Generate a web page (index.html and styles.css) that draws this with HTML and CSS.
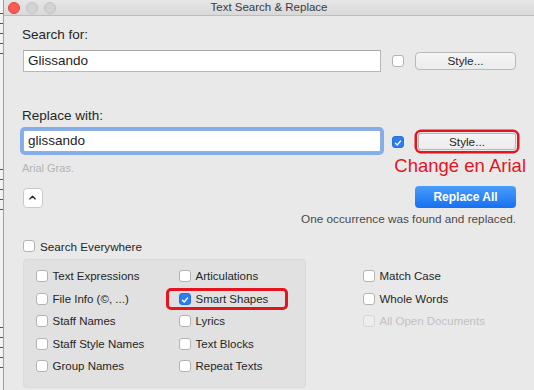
FILE: index.html
```html
<!DOCTYPE html>
<html>
<head>
<meta charset="utf-8">
<link rel="stylesheet" href="styles.css">
</head>
<body>
<div class="screen">
  <div class="edge">
    <div class="staff s1"></div>
    <div class="staff s2"></div>
    <div class="staff s3"></div>
  </div>
  <div class="window">
    <div class="titlebar">
      <div class="lights"><span class="light red"></span><span class="light"></span><span class="light"></span></div>
      <div class="title">Text Search &amp; Replace</div>
      <div></div>
    </div>
    <div class="content">
      <div class="label l1">Search for:</div>
      <div class="row r1">
        <div class="field">Glissando</div>
        <span class="cb"></span>
        <div class="btn">Style...</div>
      </div>
      <div class="label l2">Replace with:</div>
      <div class="row r2">
        <div class="field focus">glissando</div>
        <span class="cb on"><svg viewBox="0 0 12 12" width="12" height="12"><path d="M3 6.3 L5.1 8.4 L9 3.6" fill="none" stroke="#fff" stroke-width="1.6" stroke-linecap="round" stroke-linejoin="round"/></svg></span>
        <div class="btn marked">Style...</div>
      </div>
      <div class="row r3"><span class="hint">Arial Gras.</span><span class="note">Changé en Arial</span></div>
      <div class="row r4">
        <div class="up"><svg viewBox="0 0 20 20" width="18" height="18"><path d="M6.5 11 L9.5 8 L12.5 11" fill="none" stroke="#2a2a2a" stroke-width="1.5" stroke-linecap="round" stroke-linejoin="round"/></svg></div>
        <div class="primary">Replace All</div>
      </div>
      <div class="msg">One occurrence was found and replaced.</div>
      <div class="check se"><span class="cb"></span><span>Search Everywhere</span></div>
      <div class="lower">
        <div class="group">
          <div class="check"><span class="cb"></span><span>Text Expressions</span></div>
          <div class="check"><span class="cb"></span><span>Articulations</span></div>
          <div class="check"><span class="cb"></span><span>File Info (©, ...)</span></div>
          <div class="check marked"><span class="cb on"><svg viewBox="0 0 12 12" width="12" height="12"><path d="M3 6.3 L5.1 8.4 L9 3.6" fill="none" stroke="#fff" stroke-width="1.6" stroke-linecap="round" stroke-linejoin="round"/></svg></span><span>Smart Shapes</span></div>
          <div class="check"><span class="cb"></span><span>Staff Names</span></div>
          <div class="check"><span class="cb"></span><span>Lyrics</span></div>
          <div class="check"><span class="cb"></span><span>Staff Style Names</span></div>
          <div class="check"><span class="cb"></span><span>Text Blocks</span></div>
          <div class="check"><span class="cb"></span><span>Group Names</span></div>
          <div class="check"><span class="cb"></span><span>Repeat Texts</span></div>
        </div>
        <div class="opts">
          <div class="check"><span class="cb"></span><span>Match Case</span></div>
          <div class="check"><span class="cb"></span><span>Whole Words</span></div>
          <div class="check disabled"><span class="cb"></span><span>All Open Documents</span></div>
        </div>
      </div>
    </div>
  </div>
</div>
</body>
</html>
```

FILE: styles.css
```css
html, body {
  margin: 0;
  padding: 0;
}
body {
  width: 534px;
  height: 390px;
  overflow: hidden;
  background: #e9e9e9;
  font-family: "Liberation Sans", Arial, sans-serif;
  color: #232323;
}
.screen {
  display: flex;
  width: 534px;
  height: 390px;
}
.edge {
  width: 3px;
  flex: none;
  background: #f2f2f2;
  border-right: 1px solid #9e9e9e;
  display: flex;
  flex-direction: column;
}
.staff {
  height: 41px;
  background: repeating-linear-gradient(to bottom, #555 0, #555 1px, transparent 1px, transparent 10px);
}
.s1 { margin-top: 13px; }
.s2 { margin-top: 115px; }
.s3 { margin-top: 117px; }

.window {
  flex: 1;
  display: flex;
  flex-direction: column;
  background: #e9e9e9;
}
.titlebar {
  height: 15px;
  border-bottom: 1px solid #bdbdbd;
  background: linear-gradient(#e6e6e6, #d9d9d9);
  display: grid;
  grid-template-columns: 1fr auto 1fr;
  align-items: center;
}
.lights {
  display: flex;
  gap: 6px;
  padding-left: 4px;
}
.light {
  width: 10px;
  height: 10px;
  border-radius: 50%;
  background: #d3d3d3;
  border: 1px solid #c2c2c2;
}
.light.red {
  background: #fc5b55;
  border-color: #e2433d;
}
.title {
  font-size: 11.5px;
  color: #3a3a3a;
  line-height: 15px;
}

.content {
  padding: 0 18px 0 18px;
  display: flex;
  flex-direction: column;
}
.label {
  font-size: 13.5px;
  line-height: 16px;
  color: #262626;
}
.l1 { margin-top: 11px; }
.l2 { margin-top: 36px; }

.row {
  display: flex;
  align-items: center;
}
.r1 { margin-top: 7px; height: 22px; }
.r2 { margin-top: 6px; height: 22px; }

.field {
  width: 358px;
  height: 22px;
  box-sizing: border-box;
  margin-left: 1px;
  background: #fff;
  border: 1px solid #b8b8b8;
  border-top-color: #a9a9a9;
  font-size: 13.5px;
  line-height: 20px;
  padding-left: 4px;
  color: #1e1e1e;
}
.field.focus {
  border-color: #8fb0e3;
  border-radius: 2px;
  box-shadow: 0 0 0 3px #84aeea;
}

.cb {
  width: 12px;
  height: 12px;
  box-sizing: border-box;
  flex: none;
  border: 1px solid #b3b3b3;
  border-radius: 3px;
  background: #fff;
  display: flex;
}
.cb.on {
  background: #2c7cf4;
  border-color: #2570e2;
}
.r1 .cb, .r2 .cb {
  margin-left: 11px;
}
.r2 .cb { margin-top: 2px; }

.btn {
  margin-left: auto;
  width: 101px;
  height: 18px;
  box-sizing: border-box;
  border: 1px solid #b9b9b9;
  border-radius: 4px;
  background: linear-gradient(#f4f4f4, #ececec);
  font-size: 11.75px;
  line-height: 16px;
  text-align: center;
  color: #262626;
}
.btn.marked {
  box-shadow: 0 0 0 1px #e9e9e9, 0 0 0 3.5px #e5141e;
  border-radius: 3px;
  height: 17px;
  width: 98px;
  margin-right: 0;
}

.r3 {
  margin-top: 3px;
  height: 22px;
  align-items: baseline;
}
.hint {
  font-size: 11px;
  color: #b3b3b3;
}
.note {
  margin-left: auto;
  margin-right: -10px;
  font-size: 18.5px;
  line-height: 22px;
  color: #e5141e;
}

.r4 {
  margin-top: 9px;
  height: 22px;
  justify-content: space-between;
}
.up {
  width: 20px;
  height: 20px;
  margin-left: 1px;
  margin-top: 1px;
  box-sizing: border-box;
  border: 1px solid #c9c9c9;
  border-radius: 4px;
  background: #fff;
  display: flex;
  align-items: center;
  justify-content: center;
}
.primary {
  width: 101px;
  height: 22px;
  border-radius: 4px;
  background: linear-gradient(#4a9dfc, #1670f0);
  color: #fff;
  font-weight: bold;
  font-size: 12px;
  line-height: 22px;
  text-align: center;
}
.msg {
  margin-top: 4px;
  text-align: right;
  font-size: 11.75px;
  line-height: 14px;
  color: #4a4a4a;
}

.check {
  display: flex;
  align-items: center;
  gap: 5px;
  font-size: 11.5px;
  color: #262626;
  position: relative;
}
.se {
  margin-top: 13px;
  height: 14px;
  margin-left: 1px;
  font-size: 11.7px;
}
.lower {
  margin-top: 6px;
  display: flex;
}
.group {
  width: 283px;
  height: 129px;
  box-sizing: border-box;
  margin-left: 0.5px;
  background: #e1e1e1;
  border: 1px solid #dadada;
  border-radius: 4px;
  padding: 5px 0 0 12px;
  display: grid;
  grid-template-columns: 143px auto;
  grid-auto-rows: 22.5px;
  align-content: start;
}
.opts {
  margin-left: 57px;
  padding-top: 6px;
  display: grid;
  grid-auto-rows: 22.5px;
  align-content: start;
}
.check.marked::after {
  content: "";
  position: absolute;
  left: -13px;
  top: 0;
  width: 116px;
  height: 16px;
  border: 3px solid #e5141e;
  border-radius: 5px;
}
.check.disabled {
  color: #c2c2c2;
}
.check.disabled .cb {
  border-color: #d6d6d6;
  background: #ededed;
}
```
